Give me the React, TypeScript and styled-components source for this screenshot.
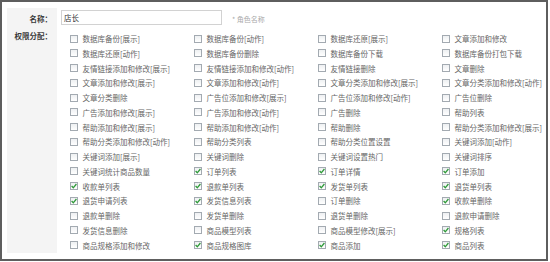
import React from "react";
import styled, { createGlobalStyle } from "styled-components";

const Global = createGlobalStyle`
  html, body { margin: 0; padding: 0; background: #ffffff; }
  * { box-sizing: border-box; }
`;

const Frame = styled.div`
  width: 548px;
  height: 261px;
  border: 2px solid #5e5e5e;
  background: #ffffff;
  padding: 6px 0 0 5px;
  font-family: "Noto Sans CJK SC", "Noto Sans", sans-serif;
`;

const Form = styled.div`
  display: grid;
  grid-template-columns: 50px 1fr;
  grid-template-rows: 21px 224px;
`;

const Label = styled.div<{ $top: number }>`
  background: #f4f4f4;
  text-align: right;
  padding-right: 5px;
  padding-top: ${(p) => p.$top}px;
  font-size: 7.5px;
  line-height: 9px;
  font-weight: 700;
  color: #3a3a3a;
`;

const NameCell = styled.div`
  display: flex;
  align-items: flex-start;
  padding: 2px 0 0 4px;
`;

const Input = styled.div`
  width: 161px;
  height: 15px;
  border: 1px solid #d2d2d2;
  padding-left: 2px;
  font-size: 7.5px;
  line-height: 13px;
  color: #333;
`;

const Hint = styled.span`
  margin: 5px 0 0 10px;
  font-size: 7px;
  line-height: 9px;
  color: #aaa;
`;

const Grid = styled.div`
  display: grid;
  grid-template-columns: repeat(4, 124px);
  grid-auto-rows: 14.75px;
  padding: 2.3px 0 0 12.5px;
`;

const Item = styled.label`
  display: flex;
  align-items: center;
  gap: 5px;
  font-size: 7.5px;
  line-height: 9px;
  color: #666666;
  white-space: nowrap;
`;

const Box = styled.span`
  width: 8px;
  height: 8px;
  flex: none;
  border: 1px solid #a3aab1;
  background: linear-gradient(#eef0f2, #ffffff);
  display: flex;
  align-items: center;
  justify-content: center;
`;

type Perm = [string, boolean];

const perms: Perm[] = [
  ["数据库备份[展示]", false], ["数据库备份[动作]", false], ["数据库还原[展示]", false], ["文章添加和修改", false],
  ["数据库还原[动作]", false], ["数据库备份删除", false], ["数据库备份下载", false], ["数据库备份打包下载", false],
  ["友情链接添加和修改[展示]", false], ["友情链接添加和修改[动作]", false], ["友情链接删除", false], ["文章删除", false],
  ["文章添加和修改[展示]", false], ["文章添加和修改[动作]", false], ["文章分类添加和修改[展示]", false], ["文章分类添加和修改[动作]", false],
  ["文章分类删除", false], ["广告位添加和修改[展示]", false], ["广告位添加和修改[动作]", false], ["广告位删除", false],
  ["广告添加和修改[展示]", false], ["广告添加和修改[动作]", false], ["广告删除", false], ["帮助列表", false],
  ["帮助添加和修改[展示]", false], ["帮助添加和修改[动作]", false], ["帮助删除", false], ["帮助分类添加和修改[展示]", false],
  ["帮助分类添加和修改[动作]", false], ["帮助分类列表", false], ["帮助分类位置设置", false], ["关键词添加[动作]", false],
  ["关键词添加[展示]", false], ["关键词删除", false], ["关键词设置热门", false], ["关键词排序", false],
  ["关键词统计商品数量", false], ["订单列表", true], ["订单详情", true], ["订单添加", true],
  ["收款单列表", true], ["退款单列表", true], ["发货单列表", true], ["退货单列表", true],
  ["退货申请列表", true], ["发货信息列表", true], ["订单删除", false], ["收款单删除", true],
  ["退款单删除", false], ["发货单删除", false], ["退货单删除", false], ["退款申请删除", false],
  ["发货信息删除", false], ["商品模型列表", false], ["商品模型修改[展示]", false], ["规格列表", true],
  ["商品规格添加和修改", false], ["商品规格图库", true], ["商品添加", true], ["商品列表", true],
];

const Check = () => (
  <svg width="6" height="6" viewBox="0 0 6 6">
    <polyline points="0.6,3 2.3,4.8 5.4,1" fill="none" stroke="#2f9a3a" strokeWidth="1.3" />
  </svg>
);

export default function App() {
  return (
    <>
      <Global />
      <Frame>
        <Form>
          <Label $top={6}>名称：</Label>
          <NameCell>
            <Input>店长</Input>
            <Hint>* 角色名称</Hint>
          </NameCell>
          <Label $top={2}>权限分配：</Label>
          <Grid>
            {perms.map(([name, on], i) => (
              <Item key={i}>
                <Box>{on && <Check />}</Box>
                {name}
              </Item>
            ))}
          </Grid>
        </Form>
      </Frame>
    </>
  );
}
